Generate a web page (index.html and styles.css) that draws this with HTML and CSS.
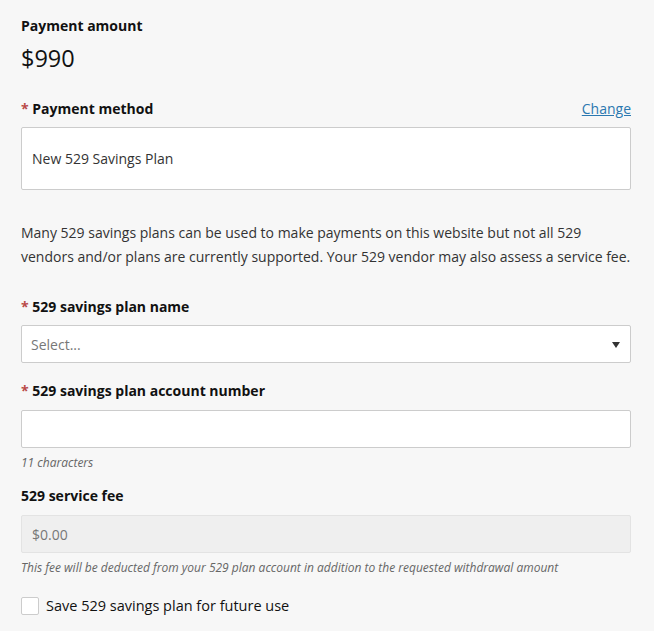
FILE: index.html
```html
<!DOCTYPE html>
<html lang="en">
<head>
<meta charset="utf-8">
<title>Payment</title>
<link rel="stylesheet" href="styles.css">
</head>
<body>
<div class="form">
  <div class="label plain first">Payment amount</div>
  <div class="amount">$990</div>

  <div class="label-row">
    <div class="label"><span class="req">*</span> Payment method</div>
    <a class="change" href="#">Change</a>
  </div>
  <div class="method-box">New 529 Savings Plan</div>

  <p class="info">Many 529 savings plans can be used to make payments on this website but not all 529 vendors and/or plans are currently supported. Your 529 vendor may also assess a service fee.</p>

  <div class="label gap-plan"><span class="req">*</span> 529 savings plan name</div>
  <div class="field select">
    <span class="placeholder">Select...</span>
    <span class="caret"></span>
  </div>

  <div class="label gap-acct"><span class="req">*</span> 529 savings plan account number</div>
  <div class="field"></div>
  <div class="hint">11 characters</div>

  <div class="label gap-fee">529 service fee</div>
  <div class="field disabled">$0.00</div>
  <div class="hint">This fee will be deducted from your 529 plan account in addition to the requested withdrawal amount</div>

  <label class="check-row">
    <span class="checkbox"></span>
    <span class="check-label">Save 529 savings plan for future use</span>
  </label>
</div>
</body>
</html>
```
FILE: styles.css
```css
html, body {
  margin: 0;
  padding: 0;
  background: #f7f7f7;
}
body {
  font-family: "Open Sans", "Liberation Sans", sans-serif;
  font-size: 14px;
  color: #222;
}
.form {
  padding: 16px 23px 0 21px;
  display: flex;
  flex-direction: column;
}
.label {
  font-weight: 700;
  font-size: 14px;
  line-height: 20px;
  color: #111;
}
.req {
  color: #b94a48;
}
.amount {
  margin-top: 7px;
  font-size: 23.5px;
  line-height: 30px;
  color: #111;
}
.label-row {
  margin-top: 26px;
  display: flex;
  justify-content: space-between;
  align-items: center;
}
.change {
  color: #2b78b0;
  text-decoration: underline;
  font-size: 14px;
  line-height: 20px;
}
.method-box {
  margin-top: 8px;
  height: 63px;
  box-sizing: border-box;
  border: 1px solid #cccccc;
  border-radius: 2px;
  background: #fff;
  padding: 0 10px;
  display: flex;
  align-items: center;
  color: #333;
}
.info {
  margin: 31px 0 0;
  line-height: 24px;
  color: #333;
}
.gap-plan { margin-top: 28px; }
.gap-acct { margin-top: 18px; }
.gap-fee { margin-top: 15px; }
.field {
  margin-top: 8px;
  height: 38px;
  box-sizing: border-box;
  border: 1px solid #cccccc;
  border-radius: 2px;
  background: #fff;
  padding: 0 10px;
  display: flex;
  align-items: center;
}
.gap-acct + .field, .gap-fee + .field { margin-top: 9px; }
.select { justify-content: space-between; padding-left: 9px; padding-right: 10px; }
.placeholder { color: #777; }
.caret {
  width: 0;
  height: 0;
  border-left: 4px solid transparent;
  border-right: 4px solid transparent;
  border-top: 6px solid #333;
  margin-top: 2px;
}
.disabled {
  background: #efefef;
  border-color: #e3e3e3;
  color: #777;
}
.hint {
  margin-top: 7px;
  font-size: 12px;
  line-height: 16px;
  font-style: italic;
  color: #666;
}
.check-row {
  margin-top: 20px;
  display: flex;
  align-items: center;
  gap: 7px;
}
.checkbox {
  width: 18px;
  height: 18px;
  box-sizing: border-box;
  border: 1px solid #ccc;
  border-radius: 2px;
  background: #fff;
}
.check-label {
  color: #111;
  font-size: 14.5px;
  line-height: 20px;
}
```
